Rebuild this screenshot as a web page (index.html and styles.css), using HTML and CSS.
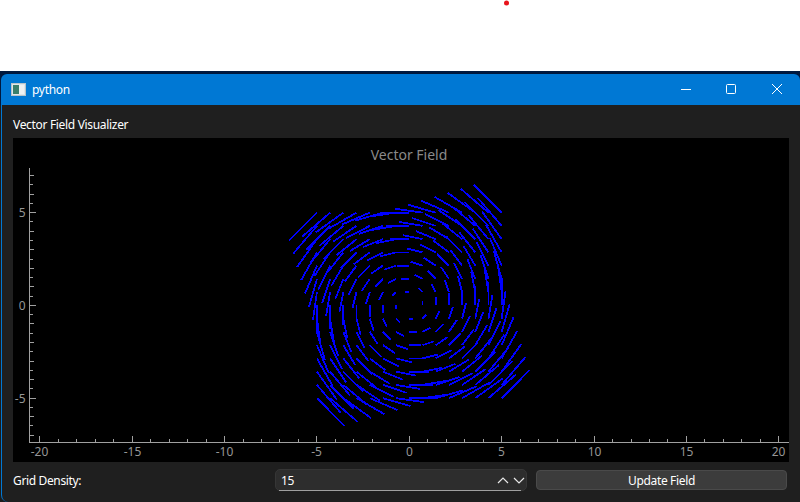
FILE: index.html
```html
<!DOCTYPE html>
<html lang="en">
<head>
    <meta charset="UTF-8">
    <title>python</title>
    <link rel="stylesheet" href="styles.css">
</head>
<body>
    <div class="desktop">
        <span class="red-dot"></span>
    </div>
    <div class="window">
        <div class="titlebar">
            <svg class="app-icon" width="15" height="13" viewBox="0 0 15 13">
                <rect x="0.5" y="0.5" width="14" height="12" fill="#dfe6ea" stroke="#b9c4c9"/>
                <rect x="2" y="2" width="6" height="9" fill="#3a7f6c"/>
                <rect x="8" y="2" width="5" height="9" fill="#eef1f2"/>
            </svg>
            <span class="title">python</span>
            <div class="caption-buttons">
                <svg width="12" height="12" viewBox="0 0 12 12"><path d="M2 6.5h10" stroke="#fff" fill="none"/></svg>
                <svg width="12" height="12" viewBox="0 0 12 12"><rect x="1.5" y="1.5" width="9" height="9" rx="1" stroke="#fff" fill="none"/></svg>
                <svg width="12" height="12" viewBox="0 0 12 12"><path d="M1 1l10 10M11 1L1 11" stroke="#fff" fill="none"/></svg>
            </div>
        </div>
        <div class="content">
            <div class="heading">Vector Field Visualizer</div>
            <div class="plot">
                <svg id="plot" width="776" height="324" viewBox="0 0 776 324"></svg>
            </div>
            <div class="controls">
                <label class="density-label">Grid Density:</label>
                <div class="spinbox">
                    <span class="spin-value">15</span>
                    <svg class="spin-arrows" width="28" height="10" viewBox="0 0 28 10">
                        <path d="M1 8l5-5 5 5M17 3l5 5 5-5" stroke="#e8e8e8" stroke-width="1.2" fill="none"/>
                    </svg>
                </div>
                <button class="update-btn">Update Field</button>
            </div>
        </div>
    </div>
    <script src="plot.js"></script>
</body>
</html>
```

FILE: styles.css
```css
html, body {
    margin: 0;
    height: 100%;
    overflow: hidden;
}
body {
    font-family: "Noto Sans", "Open Sans", sans-serif;
    background-color: #ffffff;
    display: flex;
    flex-direction: column;
}
.desktop {
    height: 71px;
    flex: none;
}
.red-dot {
    display: block;
    width: 5px;
    height: 5px;
    border-radius: 50%;
    background: #e8141c;
    margin-left: 503.5px;
    padding: 0;
    transform: translateY(0.5px);
}
.window {
    flex: 1;
    background: linear-gradient(#00193f 34px, #1c1c1c 34px);
    padding: 3px 0 0 1px;
    display: flex;
    flex-direction: column;
    min-height: 0;
}
.titlebar {
    height: 31px;
    flex: none;
    background: #0078d4;
    border-radius: 6px 6px 0 0;
    display: flex;
    align-items: center;
    padding-left: 10px;
    color: #ffffff;
    font-size: 12px;
    letter-spacing: -0.3px;
}
.app-icon {
    margin-right: 6px;
}
.caption-buttons {
    margin-left: auto;
    display: flex;
    gap: 34px;
    padding-right: 17px;
}
.caption-buttons svg {
    display: block;
    margin-top: -1px;
}
.content {
    flex: 1;
    background: #1f1f1f;
    border-left: 1px solid #0078d4;
    border-bottom-left-radius: 7px;
    padding: 0 11px 0 11px;
    display: flex;
    flex-direction: column;
    min-height: 0;
}
.heading {
    height: 33px;
    line-height: 39px;
    font-size: 12px;
    letter-spacing: -0.32px;
    color: #ffffff;
}
.plot {
    height: 324px;
    background: #000000;
    flex: none;
}
.plot svg {
    display: block;
}
.tick-label {
    font-size: 12px;
    fill: #969696;
}
.plot-title {
    font-size: 14px;
    fill: #8a8a8a;
}
.controls {
    display: flex;
    align-items: center;
    height: 36px;
    font-size: 12px;
    letter-spacing: -0.35px;
    color: #ffffff;
}
.density-label {
    width: 262px;
}
.spinbox {
    position: relative;
    width: 252px;
    height: 22px;
    box-sizing: border-box;
    background: #2d2d2d;
    border: 1px solid #363636;
    border-radius: 5px;
    display: flex;
    align-items: center;
    padding: 0 1px 0 5px;
    justify-content: space-between;
}
/* bottom accent line stops short of the rounded corners */
.spinbox::after {
    content: "";
    position: absolute;
    left: 3px;
    right: 5px;
    bottom: -1px;
    height: 1px;
    background: #a0a0a0;
}
.update-btn {
    width: 251px;
    height: 20px;
    margin-left: 9px;
    box-sizing: border-box;
    background: #3c3c3c;
    border: 1px solid #4a4a4a;
    border-radius: 4px;
    color: #ffffff;
    font-family: inherit;
    font-size: 12px;
    letter-spacing: -0.35px;
    padding: 0;
}
```

FILE: plot.js
```js
const svg = document.getElementById('plot');
const NS = 'http://www.w3.org/2000/svg';

// data -> svg coords (svg starts at 13,138 on the page)
const sx = x => 396.3 + x * 18.475;
const sy = y => 167.4 - y * 18.55;

function line(x1, y1, x2, y2, color, width) {
    const l = document.createElementNS(NS, 'line');
    l.setAttribute('x1', x1);
    l.setAttribute('y1', y1);
    l.setAttribute('x2', x2);
    l.setAttribute('y2', y2);
    l.setAttribute('stroke', color);
    l.setAttribute('stroke-width', width);
    l.setAttribute('shape-rendering', 'crispEdges');
    svg.appendChild(l);
}

function label(x, y, text, cls, anchor) {
    const t = document.createElementNS(NS, 'text');
    t.setAttribute('x', x);
    t.setAttribute('y', y);
    t.setAttribute('class', cls);
    t.setAttribute('text-anchor', anchor);
    t.textContent = text;
    svg.appendChild(t);
}

label(396, 22, 'Vector Field', 'plot-title', 'middle');

// axes
const axisColor = '#a0a0a0';
const axisX = 16.5;
const axisY = 304.5;
line(axisX, 30, axisX, axisY, axisColor, 1);
line(axisX, axisY, 776, axisY, axisColor, 1);

for (let x = -20; x <= 20; x++) {
    const px = Math.floor(sx(x)) + 0.5;
    line(px, axisY, px, axisY - (x % 5 === 0 ? 7 : 4), axisColor, 1);
    if (x % 5 === 0) label(px, 318, String(x), 'tick-label', 'middle');
}
// y axis has half unit ticks as well
for (let k = -14; k <= 14; k++) {
    const y = k / 2;
    const py = Math.floor(sy(y)) + 0.5;
    const len = y % 5 === 0 ? 6 : (k % 2 === 0 ? 4 : 3);
    line(axisX, py, axisX + len, py, axisColor, 1);
    if (y % 5 === 0) label(axisX - 4, py + 4, String(y), 'tick-label', 'end');
}

// rotational field, 15 x 15 grid from -5 to 5
const n = 15;
for (let i = 0; i < n; i++) {
    for (let j = 0; j < n; j++) {
        const x = -5 + 10 * i / (n - 1);
        const y = -5 + 10 * j / (n - 1);
        const u = -y * 0.3;
        const v = x * 0.3;
        line(sx(x), sy(y), sx(x + u), sy(y + v), '#0000ff', 1.8);
    }
}
```
